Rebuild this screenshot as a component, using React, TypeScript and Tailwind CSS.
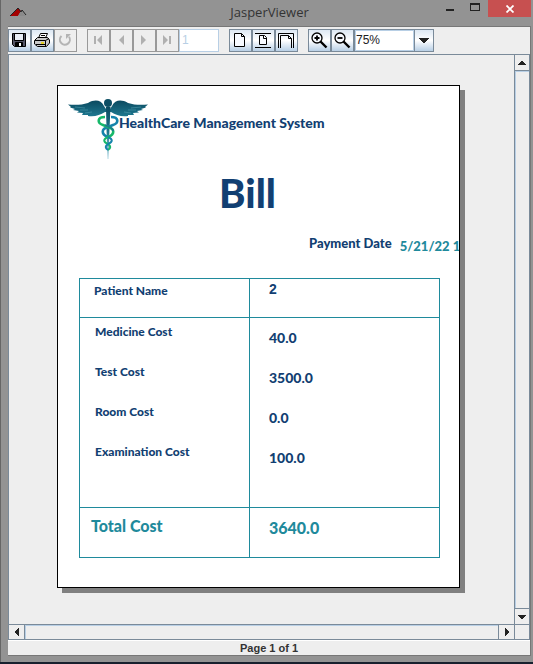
import React from "react";

const metal =
  "flex h-[23px] w-[23px] shrink-0 items-center justify-center border border-[#7a8a99] bg-linear-to-b from-[#dde8f3] via-white to-[#b8cfe5]";
const disabled =
  "flex h-[23px] w-[23px] shrink-0 items-center justify-center border border-[#999999] bg-[#eeeeee]";

function Tool({ label, off, children }: { label: string; off?: boolean; children: React.ReactNode }) {
  return (
    <button type="button" aria-label={label} disabled={off} className={off ? disabled : metal}>
      {children}
    </button>
  );
}

function Icon({ children }: { children: React.ReactNode }) {
  return (
    <svg width="17" height="17" viewBox="0 0 17 17" fill="none" className="shrink-0" aria-hidden="true">
      {children}
    </svg>
  );
}

function Caduceus() {
  return (
    <svg width="80" height="60" viewBox="0 0 80 60" fill="none" className="shrink-0" role="img" aria-label="Caduceus">
      <defs>
        <linearGradient id="wing" x1="0" y1="0" x2="0" y2="1">
          <stop offset="0" stopColor="#0b4a60" />
          <stop offset="1" stopColor="#1d7890" />
        </linearGradient>
        <linearGradient id="rod" x1="0" y1="0" x2="0" y2="1">
          <stop offset="0" stopColor="#0b4a60" />
          <stop offset="0.5" stopColor="#1d7890" />
          <stop offset="1" stopColor="#b9dce8" />
        </linearGradient>
      </defs>
      <path
        d="M0 5.500C7 6 14 6 20 4C27 0 33 1 36 7L38 10H42L44 7C47 1 53 0 60 4C66 6 73 6 80 5.500L77 8L78 8.500L73 10L75 11L69 12L71 13.500L65 14L66 16L60 16L60 17C53 18 48 16 43 13H37C32 16 27 18 20 17L20 16L14 16L15 14L9 13.500L11 12L5 11L7 10L2 8.500L3 8Z"
        fill="url(#wing)"
      />
      <path d="M7 8L17 9M12 11L20 11M17 14L24 13M73 8L63 9M68 11L60 11M63 14L56 13" stroke="#4f9aac" strokeWidth=".6" />
      <circle cx="40" cy="4" r="4" fill="#0d4e64" />
      <path d="M38 8H42.500L41.500 30L40.500 60H39.500L38.500 30Z" fill="url(#rod)" />
      <path d="M43 18C51 18 51 24 45 26L40 28C33 30 33 35 40 38" stroke="#1583ab" strokeWidth="2.600" />
      <path d="M37 18C29 18 29 24 35 26L40 28C47 30 47 35 40 38" stroke="#16b86a" strokeWidth="2.600" />
      <path d="M37 26L41 28C44 29 45 30 45 32" stroke="#1d7890" strokeWidth="1.800" />
      <path d="M40 38C35 40 35 43 40 45C43 47 43 49 40 51" stroke="#16b86a" strokeWidth="2" />
      <path d="M40 38C45 40 45 43 40 45C37 47 37 49 40 51" stroke="#1583ab" strokeWidth="2" />
    </svg>
  );
}

const costs = [
  ["Medicine Cost", "40.0"],
  ["Test Cost", "3500.0"],
  ["Room Cost", "0.0"],
  ["Examination Cost", "100.0"],
];

function Arrow({ d }: { d: string }) {
  return (
    <svg width="10" height="10" viewBox="0 0 10 10" shapeRendering="crispEdges" aria-hidden="true">
      <path d={d} fill="#222222" />
    </svg>
  );
}

export default function App() {
  return (
    <div className="flex min-h-screen flex-col border-b-2 border-[#17202e] bg-[#939393] font-['Liberation_Sans',sans-serif]">
      <div className="flex grow flex-col border-l border-[#666666] pr-[2px] pb-[6px] pl-[7px]">
        <header className="grid h-[26px] grid-cols-[1fr_auto_1fr] items-start">
          <svg width="18" height="10" viewBox="0 0 18 10" className="mt-[7px] ml-[1px]" aria-hidden="true">
            <path d="M1 9L9 1L12 4L9 9Z" fill="#a40000" />
            <path d="M9 9L12 4L17 9Z" fill="#8a8a8a" />
            <path d="M1 9L9 1L12 5L13 3L17 8" fill="none" stroke="#222" strokeWidth="1" />
          </svg>
          <h1 className="pt-[2px] font-['Open_Sans',sans-serif] text-[13px] leading-[20px] text-[#333333]">JasperViewer</h1>
          <div className="flex justify-end">
            <button type="button" aria-label="Minimize" className="flex h-[17px] w-[24px] justify-center pt-[9px]">
              <span className="h-[2px] w-[8px] bg-[#222222]" />
            </button>
            <button type="button" aria-label="Maximize" className="flex h-[17px] w-[26px] justify-center pt-[3px]">
              <span className="h-[8px] w-[10px] border border-t-2 border-[#222222]" />
            </button>
            <button type="button" aria-label="Close" className="flex h-[17px] w-[43px] items-center justify-center bg-[#c75050]">
              <svg width="8" height="8" viewBox="0 0 8 8" aria-hidden="true">
                <path d="M.5.5L7.500 7.500M7.500.5L.5 7.500" stroke="white" strokeWidth="1.800" />
              </svg>
            </button>
          </div>
        </header>

        <div className="flex grow flex-col border-t border-r border-b border-[#777777] bg-[#eeeeee]">
          <div className="flex h-[27px] items-center gap-[10px] pb-px">
            <div className="flex">
              <Tool label="Save">
                <Icon>
                  <path d="M1.500 1.500H14.500V14.500H3.500L1.500 12.500Z" fill="#555566" stroke="#000" />
                  <path d="M4 2H12V8H4Z" fill="#e9eef6" />
                  <path d="M3.500 2V8.500H12.500V2M4.500 14V10.500H11.500V14" stroke="#000" />
                  <path d="M5 11H11V14H5Z" fill="#000" />
                  <path d="M8 11H10V14H8Z" fill="#fff" />
                </Icon>
              </Tool>
              <Tool label="Print">
                <Icon>
                  <path d="M4.500 6L6.500 1.500H13.500L11 7" fill="#fff" stroke="#000" />
                  <path d="M7 3.500H11M6 5.500H10" stroke="#000" />
                  <path d="M.5 8.500L3.500 5.500H13.500L15.500 8V11L12.500 14.500H3.500L.5 12Z" fill="#c8c8c8" stroke="#000" />
                  <path d="M1 8.500H11.500V14M11.500 8.500L15 6.500M2 12.500H11" stroke="#000" />
                  <path d="M7 10H10V12H7Z" fill="#e1cf22" />
                </Icon>
              </Tool>
              <Tool label="Reload" off>
                <Icon>
                  <path d="M4.500 4A5 5 0 1 0 12 4.800" stroke="#b4b4b4" strokeWidth="2" />
                  <path d="M9 2H14L9 7Z" fill="#b4b4b4" />
                </Icon>
              </Tool>
            </div>
            <div className="flex">
              <Tool label="First page" off>
                <Icon><path d="M4 4H6V12H4ZM12 3V13L7 8Z" fill="#b0b0b0" /></Icon>
              </Tool>
              <Tool label="Previous page" off>
                <Icon><path d="M11 3V13L6 8Z" fill="#b0b0b0" /></Icon>
              </Tool>
              <Tool label="Next page" off>
                <Icon><path d="M5 3V13L10 8Z" fill="#b0b0b0" /></Icon>
              </Tool>
              <Tool label="Last page" off>
                <Icon><path d="M4 3V13L9 8ZM10 4H12V12H10Z" fill="#b0b0b0" /></Icon>
              </Tool>
              <input
                aria-label="Page number"
                disabled
                defaultValue="1"
                className="h-[23px] w-[40px] border border-[#b8cfe5] bg-white px-[2px] text-[12px] text-[#b8cfe5]"
              />
            </div>
            <div className="flex">
              <Tool label="Actual size">
                <Icon><path d="M2.500 1.500H9.500L12.500 4.500V14.500H2.500ZM9.500 1.500V4.500H12.500" fill="#f7faff" stroke="#000" /></Icon>
              </Tool>
              <Tool label="Fit page">
                <Icon>
                  <path d="M0 1.500H16M0 15.500H16" stroke="#000" />
                  <path d="M4.500 3.500H9.500L11.500 5.500V12.500H4.500ZM8.500 3.500V6.500H11.500" fill="#f7faff" stroke="#000" />
                </Icon>
              </Tool>
              <Tool label="Fit width">
                <Icon>
                  <path d="M.5 16V1.500H15.500V16" stroke="#000" />
                  <path d="M2.500 16V3.500H10.500L13.500 6.500V16M10.500 3.500V6.500H13.500" stroke="#000" />
                </Icon>
              </Tool>
            </div>
            <div className="flex">
              <Tool label="Zoom in">
                <Icon>
                  <circle cx="6" cy="6" r="5" fill="#f7faff" stroke="#000" strokeWidth="1.300" />
                  <path d="M3.500 6H8.500M6 3.500V8.500" stroke="#000" strokeWidth="1.800" />
                  <path d="M9.500 9.500L15.500 15.500" stroke="#000" strokeWidth="2.400" />
                </Icon>
              </Tool>
              <Tool label="Zoom out">
                <Icon>
                  <circle cx="6" cy="6" r="5" fill="#f7faff" stroke="#000" strokeWidth="1.300" />
                  <path d="M3.500 6H8.500" stroke="#000" strokeWidth="1.800" />
                  <path d="M9.500 9.500L15.500 15.500" stroke="#000" strokeWidth="2.400" />
                </Icon>
              </Tool>
              <div className="flex h-[23px] border border-[#7a8a99]">
                <input aria-label="Zoom level" defaultValue="75%" className="w-[59px] border border-[#b8cfe5] bg-white text-[12px] text-[#222222]" />
                <button
                  type="button"
                  aria-label="Choose zoom level"
                  className="flex w-[19px] items-center justify-center border-l border-[#7a8a99] bg-linear-to-b from-[#dde8f3] via-white to-[#b8cfe5]"
                >
                  <Arrow d="M0 3H10V4H9V5H8V6H7V7H6V8H4V7H3V6H2V5H1V4H0Z" />
                </button>
              </div>
            </div>
          </div>

          <main className="grid grow grid-cols-[1fr_15px] grid-rows-[1fr_15px] border border-[#7a8a99]">
            <div className="flex justify-center pt-[30px] pr-[6px]">
              <article className="h-[503px] w-[403px] shrink-0 overflow-hidden border border-black bg-white font-['Lato',sans-serif] font-black text-[#123f72] shadow-[5px_5px_0_#808080]">
                <div className="flex pt-[13px] pl-[10px]">
                  <Caduceus />
                  <p className="-ml-[29px] pt-[16px] text-[14px] leading-[16px]">HealthCare Management System</p>
                </div>
                <h2 className="mt-[10px] pr-[22px] text-center text-[40px] leading-[48px]">Bill</h2>
                <div className="mt-[18px] flex pl-[251px] whitespace-nowrap">
                  <span className="text-[13px] leading-[16px]">Payment Date</span>
                  <span className="pt-[3px] pl-[8px] text-[13px] leading-[16px] text-[#1f8a9c]">5/21/22 1</span>
                </div>
                <table className="mt-[24px] ml-[21px] w-[361px] border-collapse text-left align-top text-[12px] leading-[16px]">
                  <tbody>
                    <tr className="h-[39px] border border-[#1f8a9c] align-top">
                      <th scope="row" className="w-[170px] border-r border-[#1f8a9c] pt-[4px] pl-[14px] font-black">Patient Name</th>
                      <td className="pt-[2px] pl-[19px] font-['Liberation_Sans',sans-serif] text-[14px] font-bold">2</td>
                    </tr>
                    {costs.map(([name, value]) => (
                      <tr key={name} className="h-[40px] border-x border-[#1f8a9c] align-top last:h-[70px]">
                        <th scope="row" className="border-r border-[#1f8a9c] pt-[6px] pl-[15px] font-black">{name}</th>
                        <td className="pt-[12px] pl-[19px] text-[14px]">{value}</td>
                      </tr>
                    ))}
                  </tbody>
                  <tfoot>
                    <tr className="h-[50px] border border-[#1f8a9c] align-top text-[16px] leading-[20px] text-[#1f8a9c]">
                      <th scope="row" className="border-r border-[#1f8a9c] pt-[8px] pl-[11px] font-black">Total Cost</th>
                      <td className="pt-[10px] pl-[19px]">3640.0</td>
                    </tr>
                  </tfoot>
                </table>
              </article>
            </div>
            <div className="flex flex-col border-l border-[#7a8a99]">
              <button type="button" aria-label="Scroll up" className="flex h-[16px] items-center justify-center border-b border-[#7a8a99]">
                <Arrow d="M4 3H6V4H7V5H8V6H9V7H1V6H2V5H3V4H4Z" />
              </button>
              <div className="grow border-t border-l border-[#b8cfe5]" />
              <button type="button" aria-label="Scroll down" className="flex h-[16px] items-center justify-center border-t border-[#7a8a99]">
                <Arrow d="M1 3H9V4H8V5H7V6H6V7H4V6H3V5H2V4H1Z" />
              </button>
            </div>
            <div className="flex border-t border-[#7a8a99]">
              <button type="button" aria-label="Scroll left" className="flex w-[16px] items-center justify-center border-r border-[#7a8a99]">
                <Arrow d="M6 1H7V9H6V8H5V7H4V6H3V4H4V3H5V2H6Z" />
              </button>
              <div className="grow border-t border-l border-[#b8cfe5]" />
              <button type="button" aria-label="Scroll right" className="flex w-[16px] items-center justify-center border-l border-[#7a8a99]">
                <Arrow d="M3 1H4V2H5V3H6V4H7V6H6V7H5V8H4V9H3Z" />
              </button>
            </div>
            <div className="border-t border-l border-[#7a8a99]" />
          </main>
          <footer className="border-t border-white text-center text-[11px] leading-[14px] font-bold text-[#333333]">Page 1 of 1</footer>
        </div>
      </div>
    </div>
  );
}
